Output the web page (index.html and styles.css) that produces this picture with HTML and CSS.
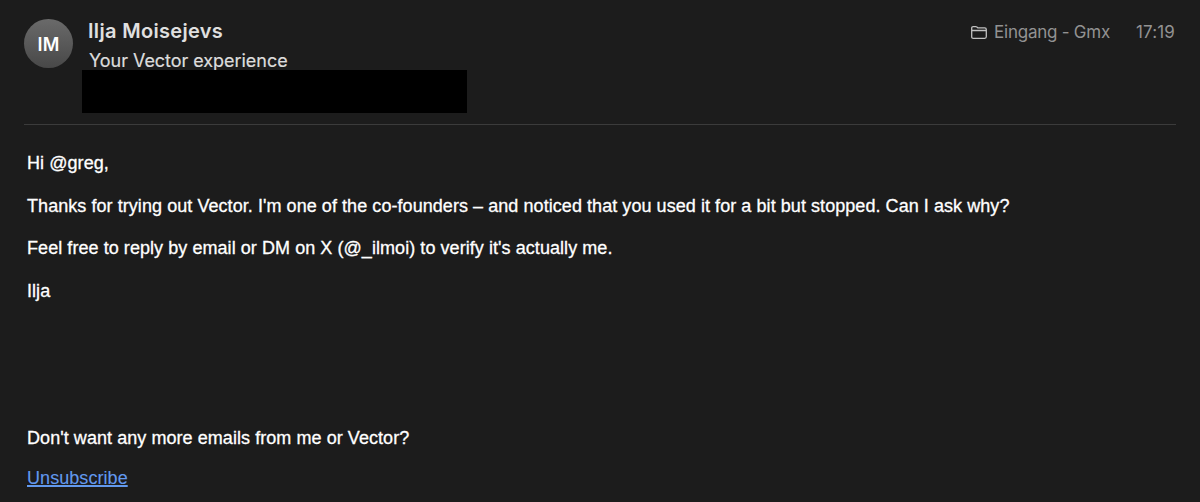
FILE: index.html
```
<!DOCTYPE html>
<html lang="en">
<head>
    <meta charset="UTF-8">
    <meta name="viewport" content="width=device-width, initial-scale=1.0">
    <title>Your Vector experience</title>
    <link rel="stylesheet" href="styles.css">
</head>
<body>
    <div class="mail">
        <header class="header">
            <div class="avatar">IM</div>
            <div class="info">
                <div class="sender">Ilja Moisejevs</div>
                <div class="subject">Your Vector experience</div>
                <div class="redacted"></div>
            </div>
            <div class="meta">
                <svg class="folder" width="16" height="13" viewBox="0 0 16 13" fill="none" stroke="currentColor" stroke-width="1.3">
                    <path d="M.7 10.800V2.200C.7 1.200 1.200.700 2.200.700h2.500c.5 0 .8.100 1.200.400l.5.400c.3.300.6.400 1.100.400h6.200c1.100 0 1.600.600 1.600 1.600v7.300c0 1.100-.5 1.500-1.600 1.500H2.400C1.300 12.300.7 11.900.7 10.800zM.7 4.500h14.600"/>
                </svg>
                <span class="mailbox">Eingang - Gmx</span>
                <span class="time">17:19</span>
            </div>
        </header>
        <main class="body">
            <p>Hi @greg,</p>
            <p>Thanks for trying out Vector. I'm one of the co-founders – and noticed that you used it for a bit but stopped. Can I ask why?</p>
            <p>Feel free to reply by email or DM on X (@_ilmoi) to verify it's actually me.</p>
            <p>Ilja</p>
        </main>
        <footer class="footer">
            <p>Don't want any more emails from me or Vector?</p>
            <a href="#">Unsubscribe</a>
        </footer>
    </div>
</body>
</html>
```
FILE: styles.css
```
body {
    margin: 0;
    background-color: #1c1c1c;
    color: #ffffff;
    font-family: "Liberation Sans", Arial, sans-serif;
    font-size: 18px;
}
.mail {
    height: 502px;
    padding: 0 24px;
    box-sizing: border-box;
    overflow: hidden;
}
.header {
    display: flex;
    height: 124px;
    border-bottom: 1px solid #3b3b3b;
    font-family: Inter, sans-serif;
}
.avatar {
    width: 49px;
    height: 49px;
    margin-top: 19px;
    border-radius: 50%;
    background: linear-gradient(#6a6a6a, #484848);
    font-size: 18px;
    font-weight: 600;
    letter-spacing: 0.3px;
    line-height: 52px;
    text-align: center;
}
.info {
    padding-top: 18px;
    margin-left: 9px;
}
.sender {
    padding-left: 6px;
    font-size: 20px;
    font-weight: 600;
    letter-spacing: 0.32px;
    line-height: 26px;
    color: #e0e0e0;
}
.subject {
    padding-left: 7px;
    font-size: 18px;
    letter-spacing: -0.04px;
    line-height: 26px;
    height: 26px;
    margin-top: 4px;
    color: #dddddd;
    -webkit-text-stroke: 0.2px #dddddd;
}
.redacted {
    width: 385px;
    height: 43px;
    margin-top: -4px;
    background: #000000;
    position: relative;
}
.meta {
    display: flex;
    height: 24px;
    margin-left: auto;
    padding: 20px 1px 0 0;
    font-size: 17px;
    line-height: 24px;
    color: #929292;
}
.folder {
    margin: 6px 7px 0 0;
    color: #c0c0c0;
}
.mailbox {
    letter-spacing: -0.25px;
}
.time {
    margin-left: 26px;
    letter-spacing: 0.15px;
}
.body {
    height: 274px;
    padding: 26px 3px 0;
    box-sizing: border-box;
}
.body p {
    margin: 0 0 18.5px;
}
.body p,
.footer p,
.footer a {
    line-height: 24px;
    letter-spacing: 0.06px;
    -webkit-text-stroke: 0.3px currentColor;
}
.footer {
    padding: 27px 3px 0;
}
.footer p {
    margin: 0 0 16px;
}
.footer a {
    color: #6299ee;
    text-decoration-thickness: 1.5px;
    -webkit-text-stroke-width: 0.1px;
}
```
